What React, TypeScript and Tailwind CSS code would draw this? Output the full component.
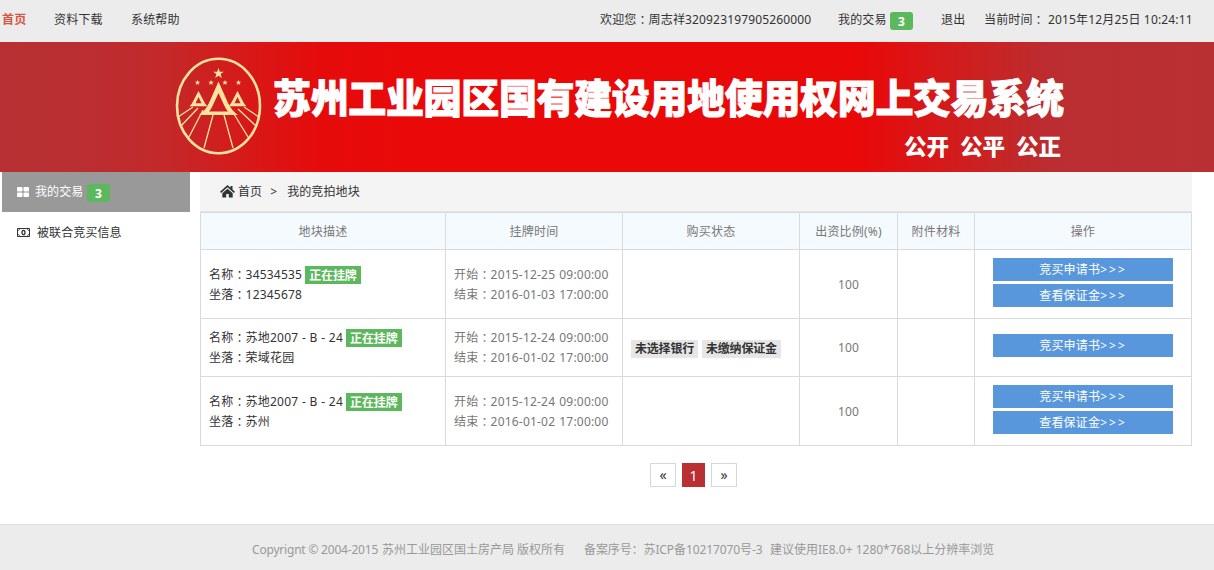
import React from 'react';

const SANS = "font-['Noto_Sans','Noto_Sans_CJK_SC',sans-serif]";

function Colon() {
  return <span className="align-[-1px] font-['Noto_Sans_CJK_TC',sans-serif] leading-none">：</span>;
}

const SMALL_STARS = [22.5, 36, 50, 63.5];

function Emblem() {
  return (
    <svg width="88" height="98" viewBox="0 0 88 98" fill="none" stroke="#fbe3a0">
      <ellipse cx="43.5" cy="49" rx="41.500" ry="47.200" strokeWidth="2.6" />
      <g fill="#fbe3a0" stroke="none">
        <path d="M43.5 11l1.300 3.700h4l-3.200 2.400 1.200 3.900-3.300-2.300-3.300 2.300 1.200-3.900-3.200-2.400h4z" />
        {SMALL_STARS.map((x) => (
          <path key={x} transform={`translate(${x} 23)`} d="M0 0l.8 1.700h1.900L1.200 3l.6 2L0 3.800-1.800 5l.6-2-1.500-1.300h1.900z" />
        ))}
      </g>
      <g fill="#fbe3a0" fillRule="evenodd" stroke="none">
        <path d="M43.500 24.500L53 46q4 8 10 12H24q6-4 10-12zM43.500 36L38 48q-2 4.500-4 6.500h19q-2-2-4-6.500z" />
        <path d="M23.500 34l5 9.500q1.500 3.500 4 5.800h-18q2.500-2.300 4-5.800zM23.500 40l-3 6.300h6z" />
        <path d="M62.500 34l5 9.500q1.500 3.500 4 5.800h-18q2.500-2.300 4-5.800zM62.500 40l-3 6.300h6z" />
      </g>
      <path strokeWidth="1.3" d="M18 50L3 60M23 51L6 69M28 53L14 80M38 58L29 91M49 58l9 33M59 57l14 23M63 52l18 17M69 50l15 10" />
    </svg>
  );
}

function Count() {
  return (
    <span className="mt-[2px] flex h-[18px] w-[23px] items-center justify-center rounded-[3px] bg-[#5cb85c] pt-px text-[12px] font-bold text-white">
      3
    </span>
  );
}

function TopBar() {
  return (
    <div className="flex h-[42px] items-center bg-[#ececec] pb-[2px] text-[12px] tracking-[0.15px] text-[#333]">
      <span className="ml-[2px] w-[52px] font-bold text-[#dd5340]">首页</span>
      <span className="w-[77px]">资料下载</span>
      <span>系统帮助</span>
      <span className="ml-auto w-[238px]">欢迎您<Colon />周志祥320923197905260000</span>
      <span className="w-[52px]">我的交易</span>
      <Count />
      <span className="ml-[28px] w-[43px]">退出</span>
      <span className="w-[230px] whitespace-pre">当前时间<Colon /> 2015年12月25日 10:24:11</span>
    </div>
  );
}

function Banner() {
  return (
    <div className="flex h-[130px] bg-[linear-gradient(90deg,#b83033_0px,#b92f32_70px,#c42829_170px,#d81818_250px,#e50b0b_320px,#e90909_400px,#e90909_860px,#da1516_920px,#c92324_990px,#bb2d30_1050px,#b93033_1214px)]">
      <div className="ml-[175px] mt-[15px] w-[88px]"><Emblem /></div>
      <div className="ml-[10px] flex w-[792px] flex-col font-['Noto_Sans_CJK_SC',sans-serif] font-black text-white">
        <h1 className="mt-[26px] h-[56px] origin-left scale-y-[1.06] whitespace-nowrap text-[38px] leading-[56px] tracking-[-0.35px] [-webkit-text-stroke:0.9px_white]">
          苏州工业园区国有建设用地使用权网上交易系统
        </h1>
        <p className="mt-[7px] flex justify-end gap-[11px] pr-[4px] text-[22.500px] leading-[28px]">
          <span>公开</span><span>公平</span><span>公正</span>
        </p>
      </div>
    </div>
  );
}

function Sidebar() {
  return (
    <nav className="ml-[2px] w-[188px] text-[12px] tracking-[0.1px]">
      <div className="flex h-[40px] items-center bg-[#999] pl-[15px] text-white">
        <svg width="12" height="10" fill="currentColor" className="-mt-px">
          <rect width="5.500" height="4.500" rx=".8" /><rect x="6.500" width="5.500" height="4.500" rx=".8" />
          <rect y="5.500" width="5.500" height="4.500" rx=".8" /><rect x="6.500" y="5.500" width="5.500" height="4.500" rx=".8" />
        </svg>
        <span className="ml-[6px] w-[52px]">我的交易</span>
        <Count />
      </div>
      <div className="flex h-[40px] items-center pl-[15px] pt-px text-[#333]">
        <svg width="13" height="9" viewBox="0 0 13 9" fill="none" stroke="currentColor">
          <path d="M.5 .5h12v8H.5z" />
          <path d="M1 2.500Q2.500 2.500 2.500 1M10.500 1q0 1.500 1.500 1.500M1 6.500q1.500 0 1.500 1.500M10.500 8q0-1.500 1.500-1.500" strokeWidth=".7" />
          <ellipse cx="6.500" cy="4.500" rx="1.500" ry="2.200" strokeWidth="1.300" />
        </svg>
        <span className="ml-[7px]">被联合竞买信息</span>
      </div>
    </nav>
  );
}

const HEADERS = ['地块描述', '挂牌时间', '购买状态', '出资比例(%)', '附件材料', '操作'];

interface Lot {
  name: string;
  place: string;
  start: string;
  end: string;
  status: string[];
  actions: string[];
}

const LOTS: Lot[] = [
  { name: '34534535', place: '12345678', start: '2015-12-25 09:00:00', end: '2016-01-03 17:00:00', status: [], actions: ['竞买申请书', '查看保证金'] },
  { name: '苏地2007 - B - 24', place: '荣域花园', start: '2015-12-24 09:00:00', end: '2016-01-02 17:00:00', status: ['未选择银行', '未缴纳保证金'], actions: ['竞买申请书'] },
  { name: '苏地2007 - B - 24', place: '苏州', start: '2015-12-24 09:00:00', end: '2016-01-02 17:00:00', status: [], actions: ['竞买申请书', '查看保证金'] },
];

const CELL = 'flex border-b border-r border-[#d9dadc] tracking-[0.2px]';

function LotRow({ lot }: { lot: Lot }) {
  const tall = lot.actions.length > 1;
  return (
    <>
      <div className={`${CELL} flex-col justify-center pl-[8px] leading-[20px] text-[#333] ${tall ? 'pt-px' : ''}`}>
        <div className="flex h-[20px] items-center">
          <span className="[word-spacing:0.3px]">名称<Colon />{lot.name}</span>
          <span className="ml-[3px] mt-px h-[18px] bg-[#5cb85c] px-[4px] font-bold leading-[19px] tracking-[-0.1px] text-white">正在挂牌</span>
        </div>
        <div className="h-[20px]">坐落<Colon />{lot.place}</div>
      </div>
      <div className={`${CELL} flex-col justify-center pl-[8px] pt-px leading-[20px] [word-spacing:0.7px]`}>
        <div className="h-[20px]">开始<Colon />{lot.start}</div>
        <div className="h-[20px]">结束<Colon />{lot.end}</div>
      </div>
      <div className={`${CELL} items-center gap-[4px] pl-[8px]`}>
        {lot.status.map((s) => (
          <span key={s} className="mt-[2px] h-[18px] bg-[#e6e6e6] px-[4px] font-bold leading-[18px] tracking-[-0.2px] text-[#333]">{s}</span>
        ))}
      </div>
      <div className={`${CELL} items-center justify-center pt-px`}>100</div>
      <div className={CELL} />
      <div className={`${CELL} flex-col gap-[3px] px-[18px] text-white ${tall ? 'pt-[8px]' : 'pt-[15px]'}`}>
        {lot.actions.map((a) => (
          <div key={a} className="flex h-[23px] items-center justify-center bg-[#5897dc]">
            {a}<span className="tracking-[2px]">&gt;&gt;&gt;</span>
          </div>
        ))}
      </div>
    </>
  );
}

function Pager() {
  return (
    <div className="mt-[17px] flex justify-center gap-[6px] pr-[5px] text-[14px] text-[#333]">
      <span className="flex h-[24px] w-[26px] items-center justify-center border border-[#cfdadd] pb-px">«</span>
      <span className="flex h-[24px] w-[23px] items-center justify-center bg-[#b92f32] text-white">1</span>
      <span className="flex h-[24px] w-[26px] items-center justify-center border border-[#cfdadd] pb-px">»</span>
    </div>
  );
}

export default function App() {
  return (
    <div className={`flex h-[570px] w-[1214px] flex-col overflow-hidden bg-white ${SANS}`}>
      <TopBar />
      <Banner />
      <div className="flex h-[352px]">
        <Sidebar />
        <main className="ml-[10px] w-[992px] text-[12px] text-[#777]">
          <div className="flex h-[40px] items-center border-b border-[#e3e3e3] bg-[#f4f4f4] pl-[20px] tracking-[0.1px] text-[#333]">
            <svg width="15" height="13" viewBox="0 0 15 13" fill="currentColor">
              <path d="M7.500 0L0 6.700l1.100 1.200L7.500 2.300l6.400 5.600L15 6.700 12.500 4.500V1h-2v1.700z" />
              <path d="M7.500 3.700L2.300 8.200V12.500h3.900V9h2.600v3.500h3.900V8.200z" />
            </svg>
            <span className="ml-[3px]">首页</span>
            <span className="ml-[8px] mr-[10px]">&gt;</span>
            <span>我的竞拍地块</span>
          </div>
          <div className="grid grid-cols-[245px_177px_177px_98px_77px_217px] grid-rows-[37px_69px_58px_69px] border-l border-t border-[#d9dadc]">
            {HEADERS.map((h) => (
              <div key={h} className={`${CELL} items-center justify-center bg-[#f5faff] pt-[2px]`}>{h}</div>
            ))}
            {LOTS.map((lot, i) => <LotRow key={i} lot={lot} />)}
          </div>
          <Pager />
        </main>
      </div>
      <footer className="flex h-[46px] items-center whitespace-pre border-t border-[#e0e0e0] bg-[#ececec] pl-[252px] pt-[4px] text-[12px] text-[#999]">
        <span className="w-[130px] tracking-[-0.2px]">Copyrignt © 2004-2015</span>
        <span className="w-[202px]">苏州工业园区国土房产局 版权所有</span>
        <span className="w-[186px] tracking-[-0.1px]">备案序号：苏ICP备10217070号-3</span>
        <span>建议使用IE8.0+ 1280*768以上分辨率浏览</span>
      </footer>
    </div>
  );
}
